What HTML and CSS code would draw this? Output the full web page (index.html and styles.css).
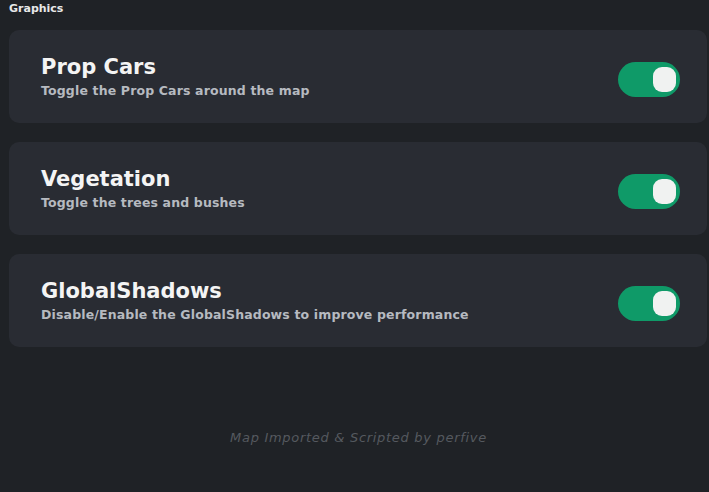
FILE: index.html
```html
<!DOCTYPE html>
<html>
<head>
<meta charset="utf-8">
<link rel="stylesheet" href="styles.css">
</head>
<body>
<div class="page">
  <div class="header">Graphics</div>
  <div class="list">
    <div class="card">
      <div class="text">
        <div class="title">Prop Cars</div>
        <div class="desc">Toggle the Prop Cars around the map</div>
      </div>
      <div class="toggle"><div class="knob"></div></div>
    </div>
    <div class="card">
      <div class="text">
        <div class="title">Vegetation</div>
        <div class="desc">Toggle the trees and bushes</div>
      </div>
      <div class="toggle"><div class="knob"></div></div>
    </div>
    <div class="card">
      <div class="text">
        <div class="title">GlobalShadows</div>
        <div class="desc">Disable/Enable the GlobalShadows to improve performance</div>
      </div>
      <div class="toggle"><div class="knob"></div></div>
    </div>
  </div>
  <div class="footer">Map Imported &amp; Scripted by perfive</div>
</div>
</body>
</html>
```
FILE: styles.css
```css
html, body {
  margin: 0;
  padding: 0;
  background: #1f2226;
  width: 709px;
  height: 492px;
  overflow: hidden;
}
.page {
  font-family: "DejaVu Sans", sans-serif;
  color: #f2f2f2;
}
.header {
  font-size: 11px;
  font-weight: bold;
  padding: 2px 0 0 9px;
  height: 28px;
  color: #e8e8e8;
}
.list {
  display: flex;
  flex-direction: column;
  gap: 19px;
  padding: 0 2px 0 9px;
}
.card {
  height: 93px;
  background: #292c33;
  border-radius: 10px;
  display: flex;
  align-items: center;
  justify-content: space-between;
  padding: 0 27px 0 32px;
}
.text {
  display: flex;
  flex-direction: column;
  margin-top: -1px;
}
.title {
  font-size: 21px;
  font-weight: bold;
  color: #f4f4f4;
  line-height: 26px;
}
.desc {
  font-size: 12.5px;
  letter-spacing: 0.15px;
  font-weight: bold;
  color: #b6bac0;
  line-height: 17px;
  margin-top: 2px;
}
.toggle {
  width: 62px;
  height: 35px;
  border-radius: 17.5px;
  background: #0f9a68;
  display: flex;
  align-items: center;
  justify-content: flex-end;
  padding-right: 4px;
  box-sizing: border-box;
  margin-top: 6px;
}
.knob {
  width: 23px;
  height: 25px;
  border-radius: 9px;
  background: #f0f2f1;
}
.footer {
  text-align: center;
  margin-top: 83px;
  padding-left: 8px;
  font-family: "DejaVu Sans", sans-serif;
  font-style: italic;
  font-weight: 200;
  font-size: 13px;
  letter-spacing: 0.7px;
  color: #55595f;
}
```
